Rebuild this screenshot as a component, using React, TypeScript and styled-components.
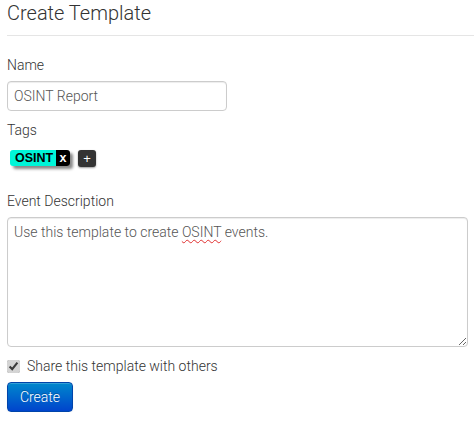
import React from "react";
import styled, { createGlobalStyle } from "styled-components";

const Global = createGlobalStyle`
  html, body { margin: 0; padding: 0; background: #fff; }
  body { font-family: Roboto, "Liberation Sans", Arial, sans-serif; font-weight: 300; color: #333; font-size: 14px; }
  * { box-sizing: border-box; }
`;

const Page = styled.div`
  padding: 0 1px 0 7px;
  width: 475px;
`;

const Title = styled.h2`
  margin: 0;
  font-weight: 300;
  font-size: 20px;
  line-height: 26px;
  color: #333;
`;

const Rule = styled.hr`
  margin: 9px 0 0 0;
  border: 0;
  border-top: 1px solid #e5e5e5;
  height: 0;
`;

const Label = styled.label<{ $top: number }>`
  display: block;
  margin-top: ${(p) => p.$top}px;
  font-size: 14px;
  font-weight: 300;
  line-height: 20px;
  color: #333;
`;

const TextInput = styled.input`
  display: block;
  margin-top: 6px;
  width: 220px;
  height: 30px;
  padding: 4px 6px;
  font-family: Roboto, "Liberation Sans", Arial, sans-serif;
  font-weight: 300;
  font-size: 14px;
  color: #555;
  border: 1px solid #ccc;
  border-radius: 4px;
  box-shadow: inset 0 1px 1px rgba(0, 0, 0, 0.075);
  outline: none;
`;

const TagRow = styled.div`
  display: flex;
  align-items: center;
  gap: 8px;
  margin-top: 10px;
  padding-left: 3px;
  height: 16px;
`;

const Tag = styled.span`
  display: inline-flex;
  height: 16px;
  box-shadow: 3px 3px 3px #888;
  border-radius: 3px;
  overflow: hidden;
  font-family: "Liberation Sans", Arial, sans-serif;
  font-weight: bold;
  font-size: 12.5px;
  line-height: 16px;
`;

const TagName = styled.span`
  background: #00f5d8;
  color: #000;
  padding: 0 0 0 5px;
  width: 46px;
`;

const TagRemove = styled.span`
  background: #000;
  color: #fff;
  width: 14px;
  text-align: center;
`;

const AddButton = styled.span`
  display: inline-flex;
  align-items: center;
  justify-content: center;
  width: 18px;
  height: 17px;
  background: #333;
  color: #fff;
  border-radius: 3px;
  font-family: "Liberation Sans", Arial, sans-serif;
  font-size: 13px;
  box-shadow: 0 1px 2px rgba(0, 0, 0, 0.4);
`;

const TextArea = styled.div`
  margin-top: 6px;
  width: 461px;
  height: 130px;
  padding: 4px 6px;
  border: 1px solid #ccc;
  border-radius: 4px;
  box-shadow: inset 0 1px 1px rgba(0, 0, 0, 0.075);
  font-size: 14px;
  font-weight: 300;
  line-height: 20px;
  color: #555;
  resize: vertical;
  overflow: auto;
  outline: none;
`;

const Misspelled = styled.span`
  text-decoration: underline wavy #e03030;
  text-decoration-thickness: 1px;
  text-underline-offset: 2px;
`;

const CheckRow = styled.label`
  display: flex;
  align-items: center;
  gap: 7px;
  margin-top: 9px;
  font-size: 14px;
  font-weight: 300;
  line-height: 20px;
  color: #333;
`;

const Check = styled.input`
  margin: 0;
  width: 13px;
  height: 13px;
  accent-color: #d4d4d4;
`;

const Button = styled.button`
  display: block;
  margin-top: 6px;
  width: 66px;
  height: 30px;
  border: 1px solid #0044aa;
  border-radius: 4px;
  background: linear-gradient(to bottom, #0088cc, #0044cc);
  color: #fff;
  font-family: Roboto, "Liberation Sans", Arial, sans-serif;
  font-weight: 300;
  font-size: 14px;
  text-shadow: 0 -1px 0 rgba(0, 0, 0, 0.25);
  box-shadow: inset 0 1px 0 rgba(255, 255, 255, 0.2), 0 1px 2px rgba(0, 0, 0, 0.05);
  padding: 0;
`;

export default function App() {
  return (
    <Page>
      <Global />
      <Title>Create Template</Title>
      <Rule />
      <Label $top={19}>Name</Label>
      <TextInput defaultValue="OSINT Report" />
      <Label $top={9}>Tags</Label>
      <TagRow>
        <Tag>
          <TagName>OSINT</TagName>
          <TagRemove>x</TagRemove>
        </Tag>
        <AddButton>+</AddButton>
      </TagRow>
      <Label $top={25}>Event Description</Label>
      <TextArea contentEditable suppressContentEditableWarning spellCheck={false}>
        Use this template to create <Misspelled>OSINT</Misspelled> events.
      </TextArea>
      <CheckRow>
        <Check type="checkbox" defaultChecked />
        Share this template with others
      </CheckRow>
      <Button>Create</Button>
    </Page>
  );
}
